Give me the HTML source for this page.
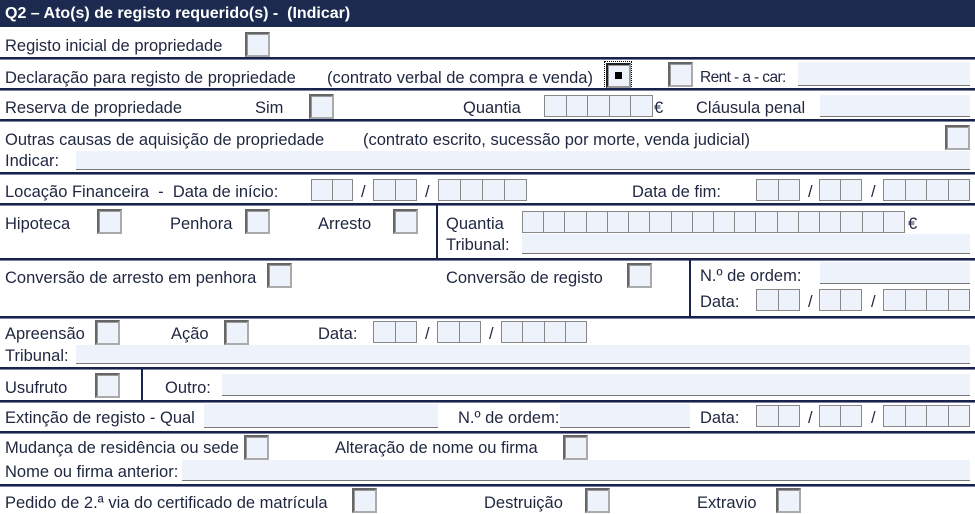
<!DOCTYPE html>
<html><head><meta charset="utf-8">
<style>
*{margin:0;padding:0;box-sizing:border-box}
body{width:975px;height:514px;background:#fff;position:relative;overflow:hidden;font-family:"Liberation Sans",sans-serif}
.t{position:absolute;font-size:16.5px;color:#1f2740;line-height:18px;white-space:nowrap;margin-top:2px}
.cb{position:absolute;width:25px;height:25px;background:#eef2fb;border:2px solid;border-color:#666 #aaa #aaa #666;box-shadow:inset 1px 1px 0 #999}
.f{position:absolute;background:#eef2fb;border-bottom:1px solid #777}
.c{position:absolute;display:flex;background:#eef2fb;border:1px solid #888;border-right:none;height:22px}
.c i{flex:1;border-right:1px solid #888}
.h{position:absolute;left:0;width:975px;height:3px;background:#18224a;border-bottom:1px solid #7a80a0}
.v{position:absolute;width:2px;background:#18224a}
</style></head><body>
<div style="position:absolute;left:0;top:0;width:975px;height:27px;background:#1b2a4e"></div>
<div class="t" style="left:5px;top:3px;color:#fff;font-weight:bold;font-size:16px">Q2 – Ato(s) de registo requerido(s) -&nbsp; (Indicar)</div>

<div class="t" style="left:5px;top:35px">Registo inicial de propriedade</div>
<div class="cb" style="left:245px;top:32px"></div>
<div class="h" style="top:57px"></div>

<div class="t" style="left:5px;top:67px">Declaração para registo de propriedade</div>
<div class="t" style="left:327px;top:67px">(contrato verbal de compra e venda)</div>
<div style="position:absolute;left:604px;top:61px;width:28px;height:28px;border:1px dotted #000"></div>
<div class="cb" style="left:606px;top:63px;border-color:#222 #999 #999 #222"><div style="position:absolute;left:7px;top:7px;width:7px;height:7px;background:#000"></div></div>
<div class="cb" style="left:668px;top:62px"></div>
<div class="t" style="left:700px;top:67px;font-size:15.5px;letter-spacing:-0.6px">Rent - a - car:</div>
<div class="f" style="left:798px;top:62px;width:172px;height:24px"></div>
<div class="h" style="top:88px"></div>

<div class="t" style="left:5px;top:97px">Reserva de propriedade</div>
<div class="t" style="left:255px;top:97px">Sim</div>
<div class="cb" style="left:309px;top:94px"></div>
<div class="t" style="left:463px;top:97px">Quantia</div>
<div class="c" style="left:544px;top:95px;width:109px"><i></i><i></i><i></i><i></i><i></i></div>
<div class="t" style="left:654px;top:97px">€</div>
<div class="t" style="left:696px;top:97px">Cláusula penal</div>
<div class="f" style="left:820px;top:95px;width:150px;height:22px"></div>
<div class="h" style="top:119px"></div>

<div class="t" style="left:5px;top:129px">Outras causas de aquisição de propriedade</div>
<div class="t" style="left:363px;top:129px">(contrato escrito, sucessão por morte, venda judicial)</div>
<div class="cb" style="left:945px;top:125px"></div>
<div class="t" style="left:5px;top:150px">Indicar:</div>
<div class="f" style="left:76px;top:151px;width:894px;height:19px"></div>
<div class="h" style="top:172px"></div>

<div class="t" style="left:5px;top:181px">Locação Financeira&nbsp; -&nbsp; Data de início:</div>
<div class="c" style="left:311px;top:179px;width:42px"><i></i><i></i></div>
<div class="t" style="left:361px;top:181px">/</div>
<div class="c" style="left:373px;top:179px;width:44px"><i></i><i></i></div>
<div class="t" style="left:425px;top:181px">/</div>
<div class="c" style="left:438px;top:179px;width:89px"><i></i><i></i><i></i><i></i></div>
<div class="t" style="left:632px;top:181px">Data de fim:</div>
<div class="c" style="left:756px;top:179px;width:44px"><i></i><i></i></div>
<div class="t" style="left:808px;top:181px">/</div>
<div class="c" style="left:819px;top:179px;width:43px"><i></i><i></i></div>
<div class="t" style="left:871px;top:181px">/</div>
<div class="c" style="left:883px;top:179px;width:87px"><i></i><i></i><i></i><i></i></div>
<div class="h" style="top:203px"></div>

<div class="t" style="left:5px;top:213px">Hipoteca</div>
<div class="cb" style="left:97px;top:209px"></div>
<div class="t" style="left:170px;top:213px">Penhora</div>
<div class="cb" style="left:245px;top:209px"></div>
<div class="t" style="left:318px;top:213px">Arresto</div>
<div class="cb" style="left:393px;top:209px"></div>
<div class="v" style="left:436px;top:205px;height:53px"></div>
<div class="t" style="left:446px;top:213px">Quantia</div>
<div class="c" style="left:522px;top:211px;width:383px"><i></i><i></i><i></i><i></i><i></i><i></i><i></i><i></i><i></i><i></i><i></i><i></i><i></i><i></i><i></i><i></i><i></i><i></i></div>
<div class="t" style="left:908px;top:213px">€</div>
<div class="t" style="left:446px;top:234px">Tribunal:</div>
<div class="f" style="left:522px;top:234px;width:448px;height:20px"></div>
<div class="h" style="top:258px"></div>

<div class="t" style="left:5px;top:267px">Conversão de arresto em penhora</div>
<div class="cb" style="left:267px;top:263px"></div>
<div class="t" style="left:446px;top:267px">Conversão de registo</div>
<div class="cb" style="left:627px;top:263px"></div>
<div class="v" style="left:689px;top:260px;height:56px"></div>
<div class="t" style="left:700px;top:265px">N.º de ordem:</div>
<div class="f" style="left:820px;top:262px;width:150px;height:22px"></div>
<div class="t" style="left:700px;top:291px">Data:</div>
<div class="c" style="left:756px;top:289px;width:44px"><i></i><i></i></div>
<div class="t" style="left:808px;top:291px">/</div>
<div class="c" style="left:819px;top:289px;width:43px"><i></i><i></i></div>
<div class="t" style="left:871px;top:291px">/</div>
<div class="c" style="left:883px;top:289px;width:87px"><i></i><i></i><i></i><i></i></div>
<div class="h" style="top:316px"></div>

<div class="t" style="left:5px;top:323px">Apreensão</div>
<div class="cb" style="left:95px;top:320px"></div>
<div class="t" style="left:171px;top:323px">Ação</div>
<div class="cb" style="left:224px;top:320px"></div>
<div class="t" style="left:318px;top:323px">Data:</div>
<div class="c" style="left:373px;top:321px;width:44px"><i></i><i></i></div>
<div class="t" style="left:425px;top:323px">/</div>
<div class="c" style="left:437px;top:321px;width:44px"><i></i><i></i></div>
<div class="t" style="left:489px;top:323px">/</div>
<div class="c" style="left:501px;top:321px;width:86px"><i></i><i></i><i></i><i></i></div>
<div class="t" style="left:5px;top:345px">Tribunal:</div>
<div class="f" style="left:76px;top:345px;width:894px;height:19px"></div>
<div class="h" style="top:367px"></div>

<div class="t" style="left:5px;top:377px">Usufruto</div>
<div class="cb" style="left:95px;top:373px"></div>
<div class="v" style="left:141px;top:369px;height:31px"></div>
<div class="t" style="left:165px;top:377px">Outro:</div>
<div class="f" style="left:222px;top:374px;width:748px;height:22px"></div>
<div class="h" style="top:400px"></div>

<div class="t" style="left:5px;top:407px">Extinção de registo - Qual</div>
<div class="f" style="left:204px;top:404px;width:234px;height:24px"></div>
<div class="t" style="left:458px;top:407px">N.º de ordem:</div>
<div class="f" style="left:560px;top:404px;width:130px;height:24px"></div>
<div class="t" style="left:700px;top:407px">Data:</div>
<div class="c" style="left:756px;top:405px;width:44px"><i></i><i></i></div>
<div class="t" style="left:808px;top:407px">/</div>
<div class="c" style="left:819px;top:405px;width:43px"><i></i><i></i></div>
<div class="t" style="left:871px;top:407px">/</div>
<div class="c" style="left:883px;top:405px;width:87px"><i></i><i></i><i></i><i></i></div>
<div class="h" style="top:431px"></div>

<div class="t" style="left:5px;top:437px">Mudança de residência ou sede</div>
<div class="cb" style="left:244px;top:435px"></div>
<div class="t" style="left:335px;top:437px">Alteração de nome ou firma</div>
<div class="cb" style="left:563px;top:435px"></div>
<div class="t" style="left:5px;top:461px">Nome ou firma anterior:</div>
<div class="f" style="left:182px;top:460px;width:788px;height:21px"></div>
<div class="h" style="top:484px"></div>

<div class="t" style="left:5px;top:492px">Pedido de 2.ª via do certificado de matrícula</div>
<div class="cb" style="left:352px;top:488px"></div>
<div class="t" style="left:484px;top:492px">Destruição</div>
<div class="cb" style="left:585px;top:488px"></div>
<div class="t" style="left:697px;top:492px">Extravio</div>
<div class="cb" style="left:776px;top:488px"></div>
</body></html>
